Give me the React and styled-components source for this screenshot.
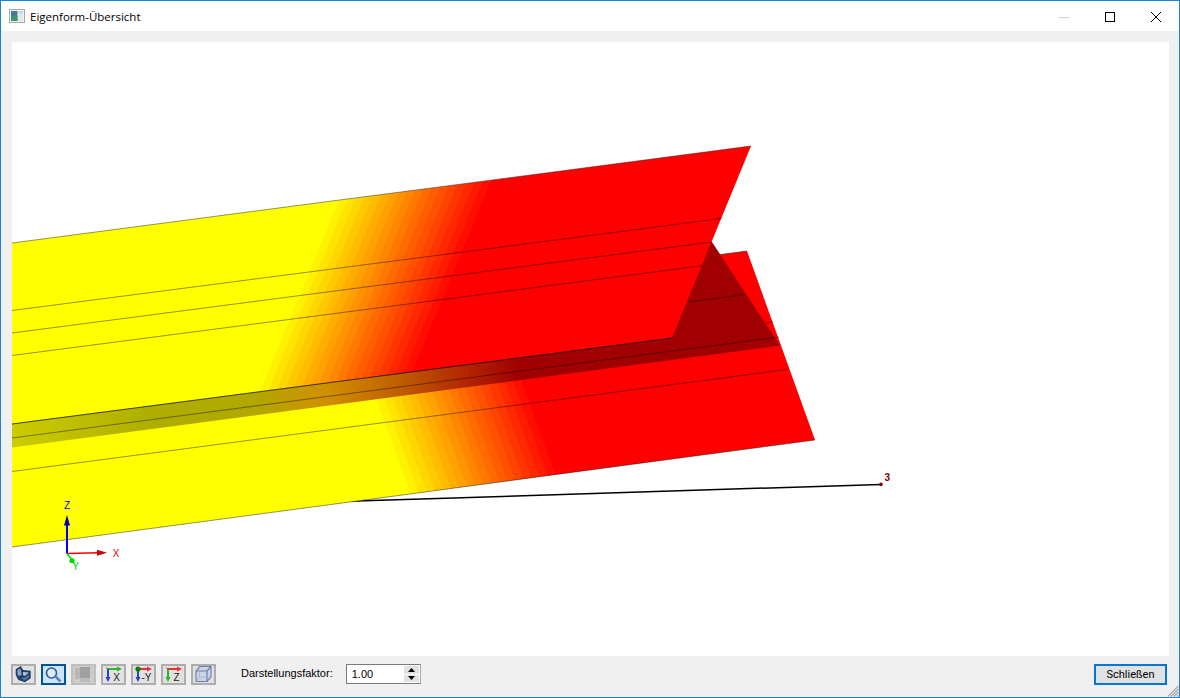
import React from "react";
import styled, { createGlobalStyle, css } from "styled-components";

const GlobalStyle = createGlobalStyle`
  html, body {
    margin: 0;
    padding: 0;
    background: #f0f0f0;
  }
`;

const BAND_COUNT = 20;

// hard-edged colour steps from yellow to red, as the FE post-processor draws them
const bandStops = [];
for (let i = 0; i < BAND_COUNT; i++) {
  const green = Math.round(255 - (255 * i) / (BAND_COUNT - 1));
  const color = `rgb(255,${green},0)`;
  bandStops.push(<stop key={`${i}a`} offset={i / BAND_COUNT} stopColor={color} />);
  bandStops.push(<stop key={`${i}b`} offset={(i + 1) / BAND_COUNT} stopColor={color} />);
}

export default function App() {
  return (
    <>
      <GlobalStyle />
      <Window>
        <TitleBar>
          <TitleIcon />
          <TitleText>Eigenform-Übersicht</TitleText>
          <WindowControls>
            <ControlBox>
              <svg width="46" height="29" viewBox="0 0 46 29">
                <path d="M18 15.5h10" stroke="#ccc" strokeWidth="1" />
              </svg>
            </ControlBox>
            <ControlBox>
              <svg width="46" height="29" viewBox="0 0 46 29">
                <rect x="18.5" y="10.5" width="9" height="9" fill="none" stroke="#000" strokeWidth="1" />
              </svg>
            </ControlBox>
            <ControlBox>
              <svg width="46" height="29" viewBox="0 0 46 29">
                <path d="M18 10l10 10M28 10l-10 10" stroke="#000" strokeWidth="1" />
              </svg>
            </ControlBox>
          </WindowControls>
        </TitleBar>

        <Content>
          <Viewport>
            <PlateScene />
          </Viewport>
        </Content>

        <BottomBar>
          <ToolButton>
            <ViewIcon />
          </ToolButton>
          <ToolButton $state="active">
            <ZoomIcon />
          </ToolButton>
          <ToolButton $state="disabled">
            <ShadeIcon />
          </ToolButton>
          <ToolButton>
            <AxisIcon right="#2fb52f" down="#2546c8" label="X" />
          </ToolButton>
          <ToolButton>
            <AxisIcon right="#e83030" down="#2546c8" label="-Y" ball />
          </ToolButton>
          <ToolButton>
            <AxisIcon right="#e83030" down="#25b52f" label="Z" />
          </ToolButton>
          <ToolButton>
            <CubeIcon />
          </ToolButton>

          <FactorLabel>Darstellungsfaktor:</FactorLabel>
          <Spinner>
            <SpinnerValue>1.00</SpinnerValue>
            <SpinnerButtons>
              <SpinnerButton>
                <svg width="7" height="4" viewBox="0 0 7 4">
                  <path d="M3.5 0L7 4H0z" fill="#000" />
                </svg>
              </SpinnerButton>
              <SpinnerButton>
                <svg width="7" height="4" viewBox="0 0 7 4">
                  <path d="M0 0h7L3.5 4z" fill="#000" />
                </svg>
              </SpinnerButton>
            </SpinnerButtons>
          </Spinner>

          <CloseButton>Schließen</CloseButton>
          <Grip width="12" height="12" viewBox="0 0 12 12">
            <path d="M11.5 1L1 11.5M11.5 4L4 11.5M11.5 7L7 11.5M11.5 10L10 11.5" stroke="#a8a8a8" strokeWidth="1.2" />
          </Grip>
        </BottomBar>
      </Window>
    </>
  );
}

function PlateScene() {
  return (
    <Scene viewBox="12 42 1157 614">
      <defs>
        <linearGradient id="upperBands" gradientUnits="userSpaceOnUse" x1="330" y1="202" x2="467" y2="258.4">
          {bandStops}
        </linearGradient>
        <linearGradient id="lowerBands" gradientUnits="userSpaceOnUse" x1="370" y1="405" x2="519" y2="351">
          {bandStops}
        </linearGradient>
        <linearGradient id="stripColors" gradientUnits="userSpaceOnUse" x1="12" y1="0" x2="780" y2="0">
          <stop offset="0" stopColor="#cccc00" />
          <stop offset="0.18" stopColor="#aeae00" />
          <stop offset="0.31" stopColor="#b0a800" />
          <stop offset="0.41" stopColor="#d09000" />
          <stop offset="0.5" stopColor="#c06000" />
          <stop offset="0.6" stopColor="#b02000" />
          <stop offset="0.66" stopColor="#a00000" />
          <stop offset="1" stopColor="#a00000" />
        </linearGradient>
      </defs>

      {/* member line to node 3 */}
      <line x1="340" y1="501.6" x2="881" y2="484.4" stroke="#000" strokeWidth="1.5" />
      <circle cx="881" cy="484.4" r="1.8" fill="#8b0000" />
      <NodeLabel x="884.5" y="480.5">3</NodeLabel>

      {/* lower plate */}
      <polygon points="12,347.3 747,251 815,440 12,547" fill="url(#lowerBands)" />
      <EdgeLine x1="12" y1="547" x2="815" y2="440" />
      <EdgeLine x1="712" y1="255.6" x2="747" y2="251" />
      <EdgeLine x1="12" y1="471.5" x2="788" y2="369.4" />

      {/* shaded strip and shadow under the upper plate */}
      <polygon points="12,424 672,338 780,345.6 12,447.5" fill="url(#stripColors)" />
      <polygon points="660,338 700,242 712,242 780,345.6" fill="#a00000" />
      <EdgeLine x1="12" y1="438" x2="779" y2="337" />
      <EdgeLine x1="688" y1="302" x2="746" y2="294.3" />
      <EdgeLine x1="766" y1="322.8" x2="773" y2="321.9" />

      {/* upper plate */}
      <polygon points="12,243 751,146 672,338 12,424" fill="url(#upperBands)" />
      <EdgeLine x1="12" y1="243" x2="751" y2="146" />
      <EdgeLine x1="12" y1="424" x2="672" y2="338" $strong />
      <EdgeLine x1="12" y1="310.5" x2="721.6" y2="218.5" />
      <EdgeLine x1="12" y1="333" x2="711.6" y2="242" />
      <EdgeLine x1="12" y1="355.5" x2="702.6" y2="265.7" />

      {/* global axes */}
      <line x1="67" y1="553.5" x2="67" y2="523" stroke="#0000f0" strokeWidth="2" />
      <path d="M67 515l3 10.5h-6z" fill="#0000b0" />
      <line x1="67" y1="553.5" x2="99" y2="552.8" stroke="#f00000" strokeWidth="1.6" />
      <path d="M107 552.7l-10-3v6z" fill="#d00000" />
      <line x1="67" y1="553.5" x2="72" y2="560" stroke="#00e000" strokeWidth="1.6" />
      <circle cx="72" cy="560.5" r="2.6" fill="#00d800" />
      <line x1="72" y1="560" x2="75" y2="564" stroke="#00e000" strokeWidth="0.8" />
      <AxisLabel x="67" y="509" fill="#0000ff">Z</AxisLabel>
      <AxisLabel x="116" y="556.5" fill="#ff0000">X</AxisLabel>
      <AxisLabel x="75.5" y="569.5" fill="#00d000">Y</AxisLabel>
    </Scene>
  );
}

function TitleIcon() {
  return (
    <TitleIconBox width="16" height="14" viewBox="0 0 16 14">
      <rect x="0.5" y="0.5" width="15" height="13" fill="#f2f2f2" stroke="#a9a9a9" />
      <rect x="2" y="2" width="6.5" height="10" fill="#3f7f8f" />
      <rect x="2" y="7" width="6.5" height="5" fill="#3c9a6c" />
      <rect x="9.5" y="2" width="4.5" height="3" fill="#c4dbe6" />
      <rect x="9.5" y="6" width="4.5" height="6" fill="#e4e4e4" />
    </TitleIconBox>
  );
}

function ViewIcon() {
  return (
    <svg width="21" height="17" viewBox="0 0 21 17">
      <path d="M2.7 3.3L7.7 0l2.6 4 7.4.7v7.6L12 16.3 5.3 14 2.7 9z" fill="#1f3f68" />
      <path d="M4.2 4.2l3-2 1.6 6-2.6 2-1.6-1.4z" fill="#8ea4c2" />
      <path d="M10 6l6 .4-4.4 3.6-1.6-1z" fill="#b4c4da" />
      <path d="M7.5 12l4.5-.5 4-3v3l-4 3z" fill="#4f709a" />
    </svg>
  );
}

function ZoomIcon() {
  return (
    <svg width="21" height="17" viewBox="0 0 21 17">
      <circle cx="8.5" cy="7" r="5" fill="#dcebf7" stroke="#2c5a94" strokeWidth="1.6" />
      <path d="M12.5 10.5l5 5" stroke="#5a83c0" strokeWidth="2.6" />
    </svg>
  );
}

function ShadeIcon() {
  return (
    <svg width="21" height="17" viewBox="0 0 21 17">
      <rect x="2" y="2" width="8" height="11" fill="#b8b8b8" />
      <rect x="7" y="1" width="10" height="11" fill="#a0a0a0" />
      <rect x="7" y="12" width="10" height="4" fill="#bcbcbc" />
    </svg>
  );
}

function AxisIcon({ right, down, label, ball }) {
  return (
    <svg width="21" height="17" viewBox="0 0 21 17">
      <path d="M5 3h10" stroke={right} strokeWidth="2" />
      <path d="M19 3l-5-2.5v5z" fill={right} />
      <path d="M5 3v9" stroke={down} strokeWidth="2" />
      <path d="M5 16l-2.5-5h5z" fill={down} />
      <path d="M3 1.5l2 1.5" stroke="#d04040" strokeWidth="1" />
      {ball && <circle cx="5" cy="3" r="2.6" fill="#147a14" />}
      <IconLetter x="13.5" y="15">
        {label}
      </IconLetter>
    </svg>
  );
}

function CubeIcon() {
  return (
    <svg width="21" height="17" viewBox="0 0 21 17">
      <path d="M3 5l3.5-4.5H18V11l-4 4.5H3z" fill="#ccd4e6" stroke="#6f7fa8" strokeWidth="1.2" />
      <path d="M3 5h11v10.5M14 5l4-4.5" fill="none" stroke="#6f7fa8" strokeWidth="1.2" />
      <path d="M6.5 .5V11H18M6.5 11L3 15.5" fill="none" stroke="#a4aec8" strokeWidth="0.8" />
    </svg>
  );
}

const Window = styled.div`
  box-sizing: border-box;
  position: relative;
  display: flex;
  flex-direction: column;
  width: 1180px;
  height: 698px;
  border: 1px solid #1883d7;
  background: #f0f0f0;
  overflow: hidden;
`;

const TitleBar = styled.div`
  display: flex;
  align-items: center;
  flex: none;
  height: 30px;
  padding-left: 8px;
  background: #fff;
`;

const TitleIconBox = styled.svg`
  flex: none;
  margin-right: 5px;
`;

const TitleText = styled.span`
  font: 11.5px "Open Sans", "Noto Sans", sans-serif;
  color: #000;
`;

const WindowControls = styled.div`
  display: flex;
  margin-left: auto;
`;

const ControlBox = styled.div`
  width: 46px;
  height: 29px;
`;

const Content = styled.div`
  flex: 1;
  display: flex;
  min-height: 0;
  padding: 11px 10px 0 11px;
`;

const Viewport = styled.div`
  flex: 1;
  background: #fff;
  overflow: hidden;
`;

const Scene = styled.svg`
  display: block;
  width: 1157px;
  height: 614px;
`;

const EdgeLine = styled.line`
  stroke: #000;
  stroke-width: 1;
  stroke-opacity: ${(props) => (props.$strong ? 0.75 : 0.42)};
`;

const NodeLabel = styled.text`
  font: bold 10px "Liberation Sans", sans-serif;
  fill: #7a0000;
`;

const AxisLabel = styled.text`
  font: 10px "Liberation Sans", sans-serif;
  text-anchor: middle;
`;

const BottomBar = styled.div`
  position: relative;
  flex: none;
  display: flex;
  align-items: flex-start;
  gap: 5px;
  height: 41px;
  padding: 8px 12px 0 10px;
  box-sizing: border-box;
`;

const toolStates = {
  active: css`
    background: #cce4f7;
    border-color: #005499;
  `,
  disabled: css`
    background: #cccccc;
    border-color: #bfbfbf;
  `,
};

const ToolButton = styled.div`
  box-sizing: border-box;
  display: flex;
  align-items: center;
  justify-content: center;
  width: 25px;
  height: 21px;
  border: 2px solid #adadad;
  background: #e1e1e1;
  ${(props) => toolStates[props.$state]}
`;

const IconLetter = styled.text`
  font: 10px "Liberation Sans", sans-serif;
  fill: #222;
  text-anchor: middle;
`;

const FactorLabel = styled.span`
  margin-left: 20px;
  margin-right: 8px;
  font: 11px/18px "Liberation Sans", sans-serif;
  color: #000;
`;

const Spinner = styled.div`
  box-sizing: border-box;
  display: flex;
  width: 75px;
  height: 20px;
  border: 1px solid #7a7a7a;
  border-right-color: #a8a8a8;
  background: #fff;
`;

const SpinnerValue = styled.span`
  flex: 1;
  padding-left: 5px;
  font: 11px/19px "Liberation Sans", sans-serif;
  color: #000;
`;

const SpinnerButtons = styled.div`
  display: flex;
  flex-direction: column;
  gap: 1px;
  width: 16px;
  padding: 1px 1px 1px 0;
  box-sizing: border-box;
  background: #fff;
`;

const SpinnerButton = styled.div`
  flex: 1;
  display: flex;
  align-items: center;
  justify-content: center;
  background: #e1e1e1;
`;

const CloseButton = styled.div`
  box-sizing: border-box;
  width: 73px;
  height: 21px;
  margin-left: auto;
  border: 2px solid #0078d7;
  background: #e1e1e1;
  font: 11px/17px Roboto, "Open Sans", sans-serif;
  text-align: center;
  color: #000;
`;

const Grip = styled.svg`
  position: absolute;
  right: 0;
  bottom: 0;
`;
